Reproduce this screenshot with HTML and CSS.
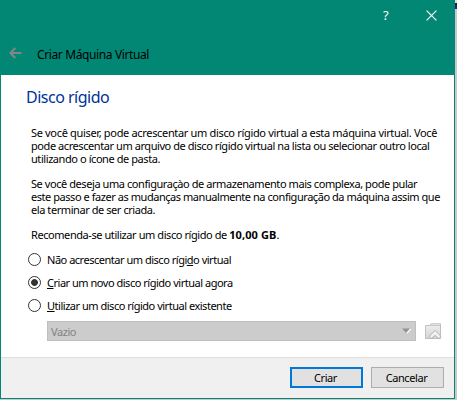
FILE: index.html
```html
<!DOCTYPE html>
<html lang="pt-BR">
<head>
<meta charset="utf-8">
<title>Criar Máquina Virtual</title>
<link rel="stylesheet" href="styles.css">
</head>
<body>
<main class="window">
  <header class="titlebar">
    <div class="controls">
      <span class="help">?</span>
      <svg class="close" width="11" height="11" viewBox="0 0 11 11"><path d="M.6.6l9.8 9.8M10.4.6L.6 10.4"/></svg>
    </div>
    <div class="heading">
      <svg class="back" width="13" height="12" viewBox="0 0 13 12"><path d="M12.5 6H1.5M6.3 1L1.3 6l5 5"/></svg>
      <span class="caption">Criar Máquina Virtual</span>
    </div>
  </header>
  <section class="content">
    <h1>Disco rígido</h1>
    <p><span class="loose">Se você quiser, pode acrescentar um disco rígido virtual a esta máquina virtual. Você</span><br>pode acrescentar um arquivo de disco rígido virtual na lista ou selecionar outro local<br>utilizando o ícone de pasta.</p>
    <p>Se você deseja uma configuraçào de armazenamento mais complexa, pode pular<br><span class="tight">este passo e fazer as mudanças manualmente na configuração da máquina assim que</span><br>ela terminar de ser criada.</p>
    <p>Recomenda-se utilizar um disco rígido de <b>10,00 GB</b>.</p>
    <div class="options">
      <div class="option"><i class="radio"></i><span>Não acrescentar um disco rígi<u>d</u>o virtual</span></div>
      <div class="option"><i class="radio checked"></i><span><u>C</u>riar um novo disco rígido virtual agora</span></div>
      <div class="option"><i class="radio"></i><span><u>U</u>tilizar um disco rígido virtual existente</span></div>
    </div>
    <div class="picker">
      <div class="select"><span>Vazio</span>
        <svg width="9" height="6" viewBox="0 0 9 6"><path d="M8.6 1L5 5.2" stroke="#fff" stroke-width="1.3"/><path d="M0 .5h8L4 4.8z" fill="#929292"/></svg>
      </div>
      <svg class="folder" width="17" height="17" viewBox="0 0 17 17">
        <defs><linearGradient id="g" x2="0" y2="1"><stop stop-color="#f0f0f0"/><stop offset="1" stop-color="#d4d4d4"/></linearGradient></defs>
        <path d="M.5 15.5v-13h4.2L6 .8h9.5v14.7z" fill="url(#g)" stroke="#c0c0c0"/>
        <path d="M5 2.5h10" stroke="#c8c8c8"/>
        <path d="M4.5 13.2L10 7.3l5.8 5.9-1.6 2.6L10 12.4l-4 3.4z" fill="#f2f2f2" stroke="#b2b2b2"/>
      </svg>
    </div>
  </section>
  <footer class="footer">
    <div class="button primary"><span>Criar</span></div>
    <div class="button"><span>Cancelar</span></div>
  </footer>
</main>
<div class="backdrop"></div>
</body>
</html>
```
FILE: styles.css
```css
* { box-sizing: border-box; }
body {
  display: flex;
  margin: 0;
  width: 457px;
  height: 400px;
  overflow: hidden;
  background: #c9c9c9;
  font: 11px/13px "Noto Sans", sans-serif;
  letter-spacing: -0.43px;
  color: #000;
}
.window {
  display: flex;
  flex: none;
  flex-direction: column;
  width: 455px;
  height: 399px;
  border: 1px solid #028775;
  background: #fff;
}
.backdrop {
  width: 2px;
  height: 9px;
  background: linear-gradient(#ddd 3px, #222 3px, #222 5px, #22228a 5px);
}
.titlebar {
  height: 74px;
  flex: none;
  background: #028775;
}
.controls {
  display: flex;
  align-items: center;
  justify-content: flex-end;
  height: 28px;
  padding-right: 17px;
  color: #fff;
}
.help {
  width: 8px;
  margin-right: 35px;
  font-size: 13px;
}
.close { fill: none; stroke: #fff; stroke-width: 1.2; }
.heading {
  display: flex;
  align-items: center;
  height: 48px;
  padding: 3px 0 0 8px;
}
.back { margin-top: -4px; fill: none; stroke: #858585; stroke-width: 2; }
.caption { margin-left: 15px; font-size: 12px; letter-spacing: -0.38px; white-space: nowrap; }
.content {
  height: 282px;
  flex: none;
  padding: 13px 10px 0 30px;
  white-space: nowrap;
}
h1 {
  margin: 0 0 20px -5px;
  font: 16px/18px "Noto Sans", sans-serif;
  letter-spacing: -0.5px;
  color: #003399;
}
p { margin: 0 0 12px; }
.loose { letter-spacing: -0.33px; }
.tight { letter-spacing: -0.45px; }
b { letter-spacing: 0.1px; }
.options { margin-top: -5px; letter-spacing: -0.48px; }
.option {
  display: flex;
  align-items: center;
  height: 23px;
  margin-left: -3px;
}
.option span { margin-left: 6px; }
u { text-underline-offset: 1px; text-decoration-thickness: 1px; }
.radio {
  width: 13px;
  height: 13px;
  border: 1px solid #333;
  border-radius: 50%;
}
.checked { background: radial-gradient(circle, #333 3px, #fff 3.8px); }
.picker { display: flex; align-items: center; padding: 4px 0 0 16px; }
.select {
  display: flex;
  align-items: center;
  justify-content: space-between;
  width: 369px;
  height: 20px;
  padding: 0 4px 0 3px;
  border: 1px solid #bfbfbf;
  background: #ccc;
  color: #838383;
}
.folder { margin-left: 9px; }
.footer {
  display: flex;
  flex: 1;
  gap: 8px;
  justify-content: flex-end;
  padding: 9px 10px 0 0;
  border-top: 1px solid #dfdfdf;
  background: #f0f0f0;
}
.button {
  display: flex;
  align-items: center;
  justify-content: center;
  width: 73px;
  height: 21px;
  padding-right: 2px;
  border: 1px solid #adadad;
  background: #e1e1e1;
}
.primary { border: 2px solid #0078d7; }
```
